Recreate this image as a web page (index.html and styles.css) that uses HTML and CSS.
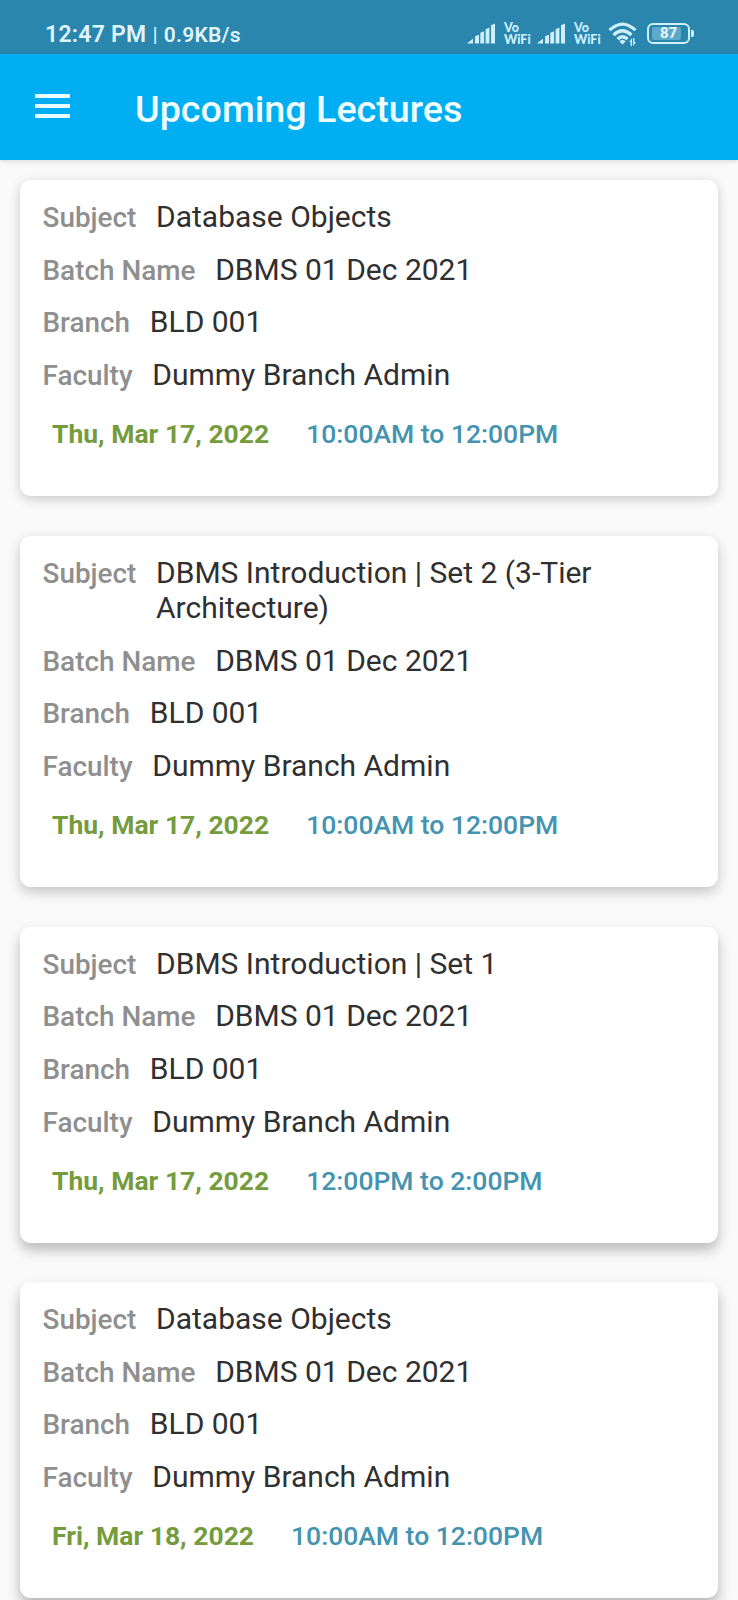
FILE: index.html
```html
<!DOCTYPE html>
<html lang="en">
<head>
  <meta charset="UTF-8">
  <meta name="viewport" content="width=device-width, initial-scale=1.0">
  <title>Upcoming Lectures</title>
  <link rel="stylesheet" href="styles.css">
</head>
<body>
  <div class="status-bar">
    <div class="clock">12:47 PM <span class="divider">|</span> <span class="speed">0.9KB/s</span></div>
    <div class="status-icons">
      <svg class="signal" width="29" height="21" viewBox="0 0 29 21">
        <path d="M0 20.5L6 15.5V20.5ZM8 13.3l4-1.5v8.7H8ZM13.3 9.8l3.8-1.6v12.3h-3.8ZM18.6 6.2l3.8-1.8v16.1h-3.8ZM24 2.3L28 .4v20.1h-4Z"/>
      </svg>
      <div class="vowifi"><span>Vo</span><span>WiFi</span></div>
      <svg class="signal" width="29" height="21" viewBox="0 0 29 21">
        <path d="M0 20.5L6 15.5V20.5ZM8 13.3l4-1.5v8.7H8ZM13.3 9.8l3.8-1.6v12.3h-3.8ZM18.6 6.2l3.8-1.8v16.1h-3.8ZM24 2.3L28 .4v20.1h-4Z"/>
      </svg>
      <div class="vowifi"><span>Vo</span><span>WiFi</span></div>
      <svg class="wifi" width="30" height="24" viewBox="0 0 30 24">
        <path class="arc" d="M1.5 8.2Q14.5-4 27.5 8.2M5.5 13Q14.5 4.5 23.5 13M9.5 17Q14.5 12.5 19.5 17"/>
        <path d="M11.3 19.2Q14.5 16.8 17.7 19.2L14.5 22.5ZM21.3 20l2.7-4v8h-1.4v-4ZM25 16h1.4v4h1.6L25 24Z"/>
      </svg>
      <div class="battery"><div class="battery-body"><span>87</span></div><div class="battery-tip"></div></div>
    </div>
  </div>

  <div class="app-bar">
    <div class="menu"><i></i><i></i><i></i></div>
    <h1>Upcoming Lectures</h1>
  </div>

  <div class="list">
    <div class="card level-1">
      <div class="row"><span class="label">Subject</span><span class="value">Database Objects</span></div>
      <div class="row"><span class="label">Batch Name</span><span class="value">DBMS 01 Dec 2021</span></div>
      <div class="row"><span class="label">Branch</span><span class="value">BLD 001</span></div>
      <div class="row"><span class="label">Faculty</span><span class="value">Dummy Branch Admin</span></div>
      <div class="schedule"><span class="date">Thu, Mar 17, 2022</span><span class="time">10:00AM to 12:00PM</span></div>
    </div>

    <div class="card level-2">
      <div class="row"><span class="label">Subject</span><span class="value">DBMS Introduction | Set 2 (3-Tier Architecture)</span></div>
      <div class="row"><span class="label">Batch Name</span><span class="value">DBMS 01 Dec 2021</span></div>
      <div class="row"><span class="label">Branch</span><span class="value">BLD 001</span></div>
      <div class="row"><span class="label">Faculty</span><span class="value">Dummy Branch Admin</span></div>
      <div class="schedule"><span class="date">Thu, Mar 17, 2022</span><span class="time">10:00AM to 12:00PM</span></div>
    </div>

    <div class="card level-3">
      <div class="row"><span class="label">Subject</span><span class="value">DBMS Introduction | Set 1</span></div>
      <div class="row"><span class="label">Batch Name</span><span class="value">DBMS 01 Dec 2021</span></div>
      <div class="row"><span class="label">Branch</span><span class="value">BLD 001</span></div>
      <div class="row"><span class="label">Faculty</span><span class="value">Dummy Branch Admin</span></div>
      <div class="schedule"><span class="date">Thu, Mar 17, 2022</span><span class="time">12:00PM to 2:00PM</span></div>
    </div>

    <div class="card level-4">
      <div class="row"><span class="label">Subject</span><span class="value">Database Objects</span></div>
      <div class="row"><span class="label">Batch Name</span><span class="value">DBMS 01 Dec 2021</span></div>
      <div class="row"><span class="label">Branch</span><span class="value">BLD 001</span></div>
      <div class="row"><span class="label">Faculty</span><span class="value">Dummy Branch Admin</span></div>
      <div class="schedule"><span class="date">Fri, Mar 18, 2022</span><span class="time">10:00AM to 12:00PM</span></div>
    </div>
  </div>
</body>
</html>
```

FILE: styles.css
```css
* {
  box-sizing: border-box;
}
body {
  font-family: Roboto, sans-serif;
  background-color: #fafafa;
  color: #303030;
  margin: 0;
  height: 1600px;
  overflow: hidden;
}
.status-bar {
  display: flex;
  justify-content: space-between;
  height: 54px;
  padding: 22px 44px 0 45px;
  background-color: #2a86ad;
  color: #dff4fd;
}
.clock {
  font-size: 23px;
  font-weight: 600;
  line-height: 26px;
  letter-spacing: 0.25px;
  white-space: nowrap;
}
.speed {
  font-size: 21px;
}
.divider {
  font-size: 21px;
  font-weight: 400;
}
.status-icons {
  display: flex;
  align-items: flex-start;
}
.status-icons svg {
  fill: #cfeffc;
}
.signal {
  margin-top: 1px;
}
.vowifi {
  display: flex;
  flex-direction: column;
  width: 33px;
  margin: 0 0 0 8px;
  font-family: Lato, sans-serif;
  font-size: 12.5px;
  font-weight: 900;
  line-height: 12px;
  color: #cfeffc;
}
.wifi {
  margin-left: 1px;
}
.wifi .arc {
  fill: none;
  stroke: #cfeffc;
  stroke-width: 3.2;
}
.battery {
  display: flex;
  align-items: center;
  margin: 1px 0 0 9px;
}
.battery-body {
  width: 43px;
  height: 21px;
  padding: 2px;
  border: 2px solid #cfeffc;
  border-radius: 6px;
}
.battery-body span {
  display: block;
  width: 29px;
  margin-left: 1px;
  padding-left: 8px;
  border-radius: 2px;
  background-color: #5ea9c9;
  color: #e6f8ff;
  font-size: 15px;
  font-weight: 700;
  line-height: 13px;
}
.battery-tip {
  width: 3px;
  height: 7px;
  margin-left: 1px;
  border-radius: 0 2px 2px 0;
  background-color: #cfeffc;
}
.app-bar {
  display: flex;
  align-items: center;
  height: 106px;
  padding: 0 35px;
  background-color: #02aef2;
  box-shadow: 0 1px 5px rgba(0, 0, 0, 0.15);
}
.menu {
  display: flex;
  flex-direction: column;
  gap: 6px;
  width: 35px;
  margin: 0 65px 2px 0;
}
.menu i {
  height: 4px;
  background-color: #eafcff;
}
h1 {
  margin: 4px 0 0;
  color: #f0fdff;
  font-size: 37.7px;
  font-weight: 500;
}
.list {
  display: flex;
  flex-direction: column;
  gap: 39.5px;
  padding: 20px;
}
.card {
  display: flex;
  flex-direction: column;
  flex-shrink: 0;
  gap: 17.2px;
  height: 316px;
  padding: 19px 22.5px 0;
  border-radius: 11px;
  background-color: #fff;
}
/* shadows get deeper further down the screen */
.level-1 { box-shadow: 0 3px 12px rgba(0, 0, 0, 0.2); }
.level-2 {
  height: 351.5px;
  box-shadow: 0 5px 13px rgba(0, 0, 0, 0.22);
}
.level-3 { box-shadow: 0 7px 13px rgba(0, 0, 0, 0.26); }
.level-4 { box-shadow: 0 8px 14px rgba(0, 0, 0, 0.28); }
.row {
  display: flex;
  align-items: baseline;
  gap: 19.7px;
}
.label {
  color: #8f8f8f;
  font-size: 27.9px;
  font-weight: 500;
  line-height: 30px;
  white-space: nowrap;
}
.value {
  max-width: 480px;
  font-size: 30px;
  line-height: 35.5px;
}
.schedule {
  display: flex;
  gap: 37px;
  margin-top: 8.7px;
  padding-left: 9.5px;
  font-size: 26.5px;
  line-height: 31px;
}
.date {
  color: #759c3c;
  font-weight: 700;
}
.time {
  color: #4393b1;
  font-weight: 500;
}
```
